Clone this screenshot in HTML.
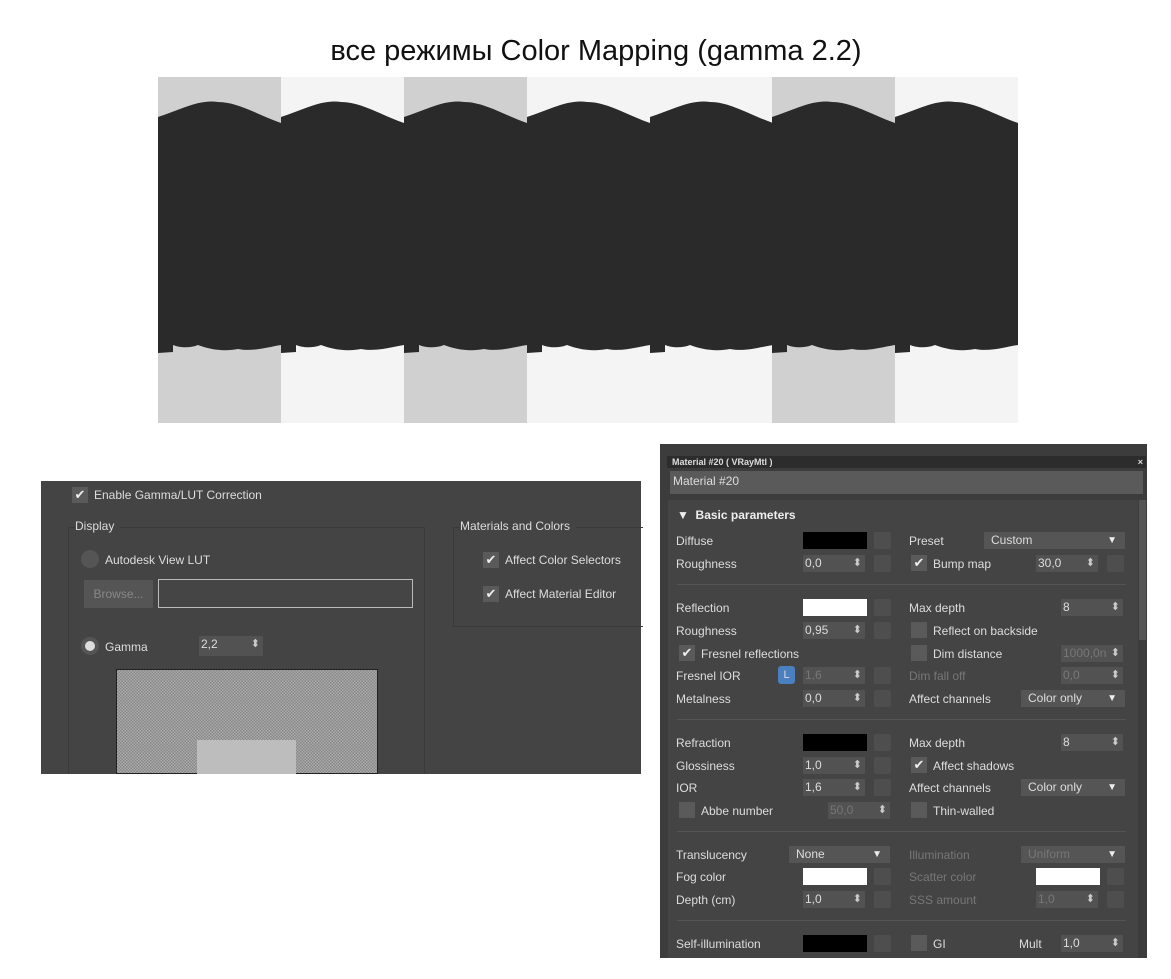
<!DOCTYPE html><html><head><meta charset="utf-8"><style>
*{margin:0;padding:0;box-sizing:border-box}
body{width:1171px;height:979px;background:#fff;position:relative;overflow:hidden;font-family:"Liberation Sans",sans-serif}
.a{position:absolute}
.t{position:absolute;font-size:12px;color:#ddd;white-space:nowrap}
.cb{position:absolute;width:16px;height:16px;background:#5a5a5a;color:#eee;font-size:13px;line-height:16px;text-align:center}
.sw{position:absolute;width:64px;height:17px}
.sq{position:absolute;width:17px;height:17px;background:#4e4e4e;border-radius:2px}
.sp{position:absolute;width:62px;height:17px;background:#525252;color:#ddd;font-size:12px;line-height:17px;padding-left:2px}
.sp:after{content:"⬍";position:absolute;right:3px;top:0;font-size:11px;color:#ccc}
.dd{position:absolute;height:17px;background:#555;color:#ddd;font-size:12px;line-height:17px;padding-left:7px}
.dd:after{content:"▼";position:absolute;right:8px;top:0;font-size:10px;color:#eee}
.hr{position:absolute;left:677px;width:449px;height:1px;background:#2e2e2e;border-bottom:1px solid #555}
.dim{color:#777}
</style></head><body>
<div class="a" style="left:0;top:35px;width:1192px;text-align:center;font-size:29px;color:#111">все режимы Color Mapping (gamma 2.2)</div>
<svg class="a" style="left:158px;top:77px" width="860" height="346">
<defs><path id="c" d="M0 40 C20 34 40 22 60 25 C80 25 100 38 123 46 L123 268 C110 270 95 275 80 272 C65 275 50 272 40 268 C30 272 20 270 15 268 L15 275 L0 276 Z" fill="#2a2a2a"/></defs>
<rect x="0" width="123" height="346" fill="#d0d0d0"/><rect x="123" width="123" height="346" fill="#f4f4f4"/>
<rect x="246" width="123" height="346" fill="#d0d0d0"/><rect x="369" width="245" height="346" fill="#f4f4f4"/>
<rect x="614" width="123" height="346" fill="#d0d0d0"/><rect x="737" width="123" height="346" fill="#f4f4f4"/>
<use href="#c" x="0"/><use href="#c" x="123"/><use href="#c" x="246"/><use href="#c" x="369"/><use href="#c" x="492"/><use href="#c" x="614"/><use href="#c" x="737"/>
</svg>
<div class="a" style="left:41px;top:481px;width:600px;height:293px;background:#444"></div>
<div class="cb" style="left:72px;top:487px">✔</div><div class="t" style="left:94px;top:488px">Enable Gamma/LUT Correction</div>
<div class="a" style="left:68px;top:527px;width:357px;height:247px;border:1px solid #3a3a3a;border-bottom:none"></div>
<div class="t" style="left:75px;top:519px;background:#444;padding-right:6px">Display</div>
<div class="a" style="left:453px;top:527px;width:190px;height:100px;border:1px solid #3a3a3a;border-right:none"></div>
<div class="t" style="left:460px;top:519px;background:#444;padding-right:6px">Materials and Colors</div>
<div class="a" style="left:81px;top:550px;width:18px;height:18px;border-radius:50%;background:#555"></div>
<div class="t" style="left:105px;top:553px">Autodesk View LUT</div>
<div class="a" style="left:84px;top:580px;width:69px;height:28px;background:#555;color:#888;font-size:12px;line-height:28px;text-align:center">Browse...</div>
<div class="a" style="left:158px;top:579px;width:255px;height:29px;border:1px solid #bbb;background:#454545"></div>
<div class="a" style="left:81px;top:637px;width:18px;height:18px;border-radius:50%;background:#555"><div class="a" style="left:4px;top:4px;width:10px;height:10px;border-radius:50%;background:#ddd"></div></div>
<div class="t" style="left:105px;top:640px">Gamma</div>
<div class="sp" style="left:199px;top:636px;width:64px;height:20px;line-height:16px">2,2</div>
<div class="a" style="left:116px;top:669px;width:262px;height:105px;border:1px solid #222;background:repeating-conic-gradient(#aaa 0 25%,#888 0 50%) 0 0/3px 3px"></div>
<div class="a" style="left:197px;top:740px;width:99px;height:34px;background:#bdbdbd"></div>
<div class="cb" style="left:483px;top:552px">✔</div><div class="t" style="left:505px;top:553px">Affect Color Selectors</div>
<div class="cb" style="left:483px;top:586px">✔</div><div class="t" style="left:505px;top:587px">Affect Material Editor</div>
<div class="a" style="left:660px;top:444px;width:487px;height:514px;background:#3c3c3c"></div>
<div class="a" style="left:667px;top:456px;width:479px;height:12px;background:#2c2c2c;color:#ddd;font-size:9px;font-weight:bold;line-height:12px;padding-left:5px">Material #20 ( VRayMtl )<span style="float:right;padding-right:3px">×</span></div>
<div class="a" style="left:670px;top:471px;width:473px;height:23px;background:#5a5a5a;color:#ddd;font-size:12px;line-height:20px;padding-left:3px">Material #20</div>
<div class="a" style="left:668px;top:500px;width:470px;height:458px;background:#444"></div>
<div class="a" style="left:1139px;top:500px;width:7px;height:140px;background:#555"></div>
<div class="t" style="left:677px;top:508px;font-size:12px;font-weight:bold;color:#eee">▼&nbsp; Basic parameters</div>
<div class="t" style="left:676px;top:534px">Diffuse</div><div class="sw" style="left:803px;top:532px;background:#000"></div><div class="sq" style="left:874px;top:532px"></div>
<div class="t" style="left:909px;top:534px">Preset</div><div class="dd" style="left:984px;top:532px;width:141px">Custom</div>
<div class="t" style="left:676px;top:557px">Roughness</div><div class="sp" style="left:803px;top:555px">0,0</div><div class="sq" style="left:874px;top:555px"></div>
<div class="cb" style="left:911px;top:555px">✔</div><div class="t" style="left:933px;top:557px">Bump map</div><div class="sp" style="left:1036px;top:555px">30,0</div><div class="sq" style="left:1107px;top:555px"></div>
<div class="hr" style="top:584px"></div>
<div class="t" style="left:676px;top:601px">Reflection</div><div class="sw" style="left:803px;top:599px;background:#fff"></div><div class="sq" style="left:874px;top:599px"></div>
<div class="t" style="left:909px;top:601px">Max depth</div><div class="sp" style="left:1061px;top:599px">8</div>
<div class="t" style="left:676px;top:624px">Roughness</div><div class="sp" style="left:803px;top:622px">0,95</div><div class="sq" style="left:874px;top:622px"></div>
<div class="cb" style="left:911px;top:622px"></div><div class="t" style="left:933px;top:624px">Reflect on backside</div>
<div class="cb" style="left:679px;top:645px">✔</div><div class="t" style="left:701px;top:647px">Fresnel reflections</div>
<div class="cb" style="left:911px;top:645px"></div><div class="t" style="left:933px;top:647px">Dim distance</div><div class="sp dim" style="left:1061px;top:645px;color:#777">1000,0n</div>
<div class="t" style="left:676px;top:669px">Fresnel IOR</div><div class="a" style="left:778px;top:666px;width:17px;height:18px;background:#4a7fc0;border-radius:3px;color:#ddd;font-size:11px;line-height:18px;text-align:center">L</div><div class="sp" style="left:803px;top:667px;color:#777">1,6</div><div class="sq" style="left:874px;top:667px"></div>
<div class="t dim" style="left:909px;top:669px">Dim fall off</div><div class="sp" style="left:1061px;top:667px;color:#777">0,0</div>
<div class="t" style="left:676px;top:692px">Metalness</div><div class="sp" style="left:803px;top:690px">0,0</div><div class="sq" style="left:874px;top:690px"></div>
<div class="t" style="left:909px;top:692px">Affect channels</div><div class="dd" style="left:1021px;top:690px;width:104px">Color only</div>
<div class="hr" style="top:719px"></div>
<div class="t" style="left:676px;top:736px">Refraction</div><div class="sw" style="left:803px;top:734px;background:#000"></div><div class="sq" style="left:874px;top:734px"></div>
<div class="t" style="left:909px;top:736px">Max depth</div><div class="sp" style="left:1061px;top:734px">8</div>
<div class="t" style="left:676px;top:759px">Glossiness</div><div class="sp" style="left:803px;top:757px">1,0</div><div class="sq" style="left:874px;top:757px"></div>
<div class="cb" style="left:911px;top:757px">✔</div><div class="t" style="left:933px;top:759px">Affect shadows</div>
<div class="t" style="left:676px;top:781px">IOR</div><div class="sp" style="left:803px;top:779px">1,6</div><div class="sq" style="left:874px;top:779px"></div>
<div class="t" style="left:909px;top:781px">Affect channels</div><div class="dd" style="left:1021px;top:779px;width:104px">Color only</div>
<div class="cb" style="left:679px;top:802px"></div><div class="t" style="left:701px;top:804px">Abbe number</div><div class="sp" style="left:828px;top:802px;color:#777">50,0</div>
<div class="cb" style="left:911px;top:802px"></div><div class="t" style="left:933px;top:804px">Thin-walled</div>
<div class="hr" style="top:831px"></div>
<div class="t" style="left:676px;top:848px">Translucency</div><div class="dd" style="left:789px;top:846px;width:101px">None</div>
<div class="t dim" style="left:909px;top:848px">Illumination</div><div class="dd dim" style="left:1021px;top:846px;width:104px;color:#777">Uniform</div>
<div class="t" style="left:676px;top:870px">Fog color</div><div class="sw" style="left:803px;top:868px;background:#fff"></div><div class="sq" style="left:874px;top:868px"></div>
<div class="t dim" style="left:909px;top:870px">Scatter color</div><div class="sw" style="left:1036px;top:868px;background:#fff"></div><div class="sq" style="left:1107px;top:868px"></div>
<div class="t" style="left:676px;top:893px">Depth (cm)</div><div class="sp" style="left:803px;top:891px">1,0</div><div class="sq" style="left:874px;top:891px"></div>
<div class="t dim" style="left:909px;top:893px">SSS amount</div><div class="sp" style="left:1036px;top:891px;color:#777">1,0</div><div class="sq" style="left:1107px;top:891px"></div>
<div class="hr" style="top:920px"></div>
<div class="t" style="left:676px;top:937px">Self-illumination</div><div class="sw" style="left:803px;top:935px;background:#000"></div><div class="sq" style="left:874px;top:935px"></div>
<div class="cb" style="left:911px;top:935px"></div><div class="t" style="left:933px;top:937px">GI</div>
<div class="t" style="left:1019px;top:937px">Mult</div><div class="sp" style="left:1061px;top:935px">1,0</div>
</body></html>
